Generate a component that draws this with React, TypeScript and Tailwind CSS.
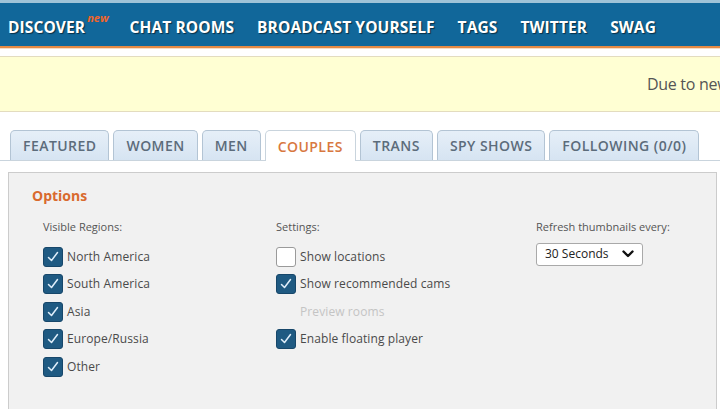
import React from 'react'

const navItems = ['DISCOVER', 'CHAT ROOMS', 'BROADCAST YOURSELF', 'TAGS', 'TWITTER', 'SWAG']
const tabs = ['FEATURED', 'WOMEN', 'MEN', 'COUPLES', 'TRANS', 'SPY SHOWS', 'FOLLOWING (0/0)']

function Box({ checked, hidden }: { checked?: boolean; hidden?: boolean }) {
  if (hidden) return <span className="w-[20px] h-[20px] shrink-0" />
  if (!checked)
    return <span className="w-[20px] h-[20px] shrink-0 rounded-[3px] border border-[#9a9a9a] bg-white" />
  return (
    <span className="w-[20px] h-[20px] shrink-0 rounded-[3px] bg-[#1f5a82] border border-[#17476a] flex items-center justify-center">
      <svg width="14" height="14" viewBox="0 0 14 14" fill="none">
        <path d="M2.5 7.5 L5.5 10.5 L11.5 2.5" stroke="#dfeefa" strokeWidth="1.5" strokeLinecap="round" strokeLinejoin="round" />
      </svg>
    </span>
  )
}

function Row({ label, checked, hidden, faded }: { label: string; checked?: boolean; hidden?: boolean; faded?: boolean }) {
  return (
    <div className="flex items-center h-[20px] gap-[4px]">
      <Box checked={checked} hidden={hidden} />
      <span className={`text-[12px] tracking-[0.1px] ${faded ? 'text-[#c4c4c4]' : 'text-[#4a4a4a]'}`}>{label}</span>
    </div>
  )
}

export default function App() {
  return (
    <div className="w-[720px] h-[409px] overflow-hidden bg-white" style={{ fontFamily: '"Open Sans", "DejaVu Sans", sans-serif' }}>
      {/* barra superior */}
      <div className="h-[3px] bg-[#9fc3d8]" />
      <div className="h-[43px] bg-[#11679a] flex items-center pl-[8px] pt-[6px] gap-[23px]">
        {navItems.map((n, i) => (
          <div key={n} className="relative flex items-center">
            <span className="text-white font-bold text-[15.5px] tracking-[0.1px] [text-shadow:1px_1px_1px_rgba(0,0,0,0.55)]">{n}</span>
            {i === 0 && (
              <span className="ml-[2px] -mt-[18px] mr-[-2px] text-[#f0652a] font-bold italic text-[11px]">new</span>
            )}
          </div>
        ))}
      </div>
      <div className="h-[2px] bg-[#e58a45]" />
      <div className="h-[1px] bg-[#f6dcc4]" />

      {/* aviso */}
      <div className="mt-[7px] h-[56px] bg-[#ffffd3] border-y border-[#e3dcbf] flex items-center pl-[647px] overflow-hidden">
        <span className="whitespace-nowrap text-[16px] text-[#555] tracking-[-0.3px]">Due to new regulations</span>
      </div>

      {/* pestañas */}
      <div className="mt-[18px] flex items-end gap-[4px] pl-[10px] border-b border-[#c9d4dd] h-[31px]">
        {tabs.map((t) => {
          const active = t === 'COUPLES'
          return (
            <div
              key={t}
              className={`h-[30px] px-[12px] flex items-center rounded-t-[5px] border border-b-0 text-[14px] font-semibold tracking-[0.45px] ${
                active
                  ? 'bg-white border-[#c9d4dd] text-[#d8783f] h-[31px] -mb-[1px]'
                  : 'bg-gradient-to-b from-[#e6eff8] to-[#d6e4f2] border-[#b3c4d4] text-[#5c6c7b]'
              }`}
            >
              {t}
            </div>
          )
        })}
      </div>

      {/* panel de opciones */}
      <div className="mt-[11px] mx-[8px] mr-[3px] h-[240px] border border-[#cccccc] bg-[#f1f1f1] pt-[12px] pl-[23px]">
        <div className="text-[#d96a2e] font-bold text-[14px]">Options</div>
        <div className="flex mt-[13px]">
          <div className="w-[244px] pl-[11px]">
            <div className="text-[11px] text-[#555] mb-[11px]">Visible Regions:</div>
            <div className="flex flex-col gap-[7.5px]">
              <Row label="North America" checked />
              <Row label="South America" checked />
              <Row label="Asia" checked />
              <Row label="Europe/Russia" checked />
              <Row label="Other" checked />
            </div>
          </div>
          <div className="w-[260px]">
            <div className="text-[11px] text-[#555] mb-[11px]">Settings:</div>
            <div className="flex flex-col gap-[7.5px]">
              <Row label="Show locations" />
              <Row label="Show recommended cams" checked />
              <Row label="Preview rooms" hidden faded />
              <Row label="Enable floating player" checked />
            </div>
          </div>
          <div>
            <div className="text-[11px] text-[#555] mb-[7px]">Refresh thumbnails every:</div>
            <div className="w-[107px] h-[23px] bg-white border border-[#a9a9a9] rounded-[3px] flex items-center justify-between px-[8px]">
              <span className="text-[12px] text-[#222]">30 Seconds</span>
              <svg width="12" height="10" viewBox="0 0 12 10">
                <path d="M1.5 2.5 L6 7 L10.5 2.5" stroke="#111" strokeWidth="2.4" fill="none" strokeLinecap="round" strokeLinejoin="round" />
              </svg>
            </div>
          </div>
        </div>
      </div>
    </div>
  )
}
